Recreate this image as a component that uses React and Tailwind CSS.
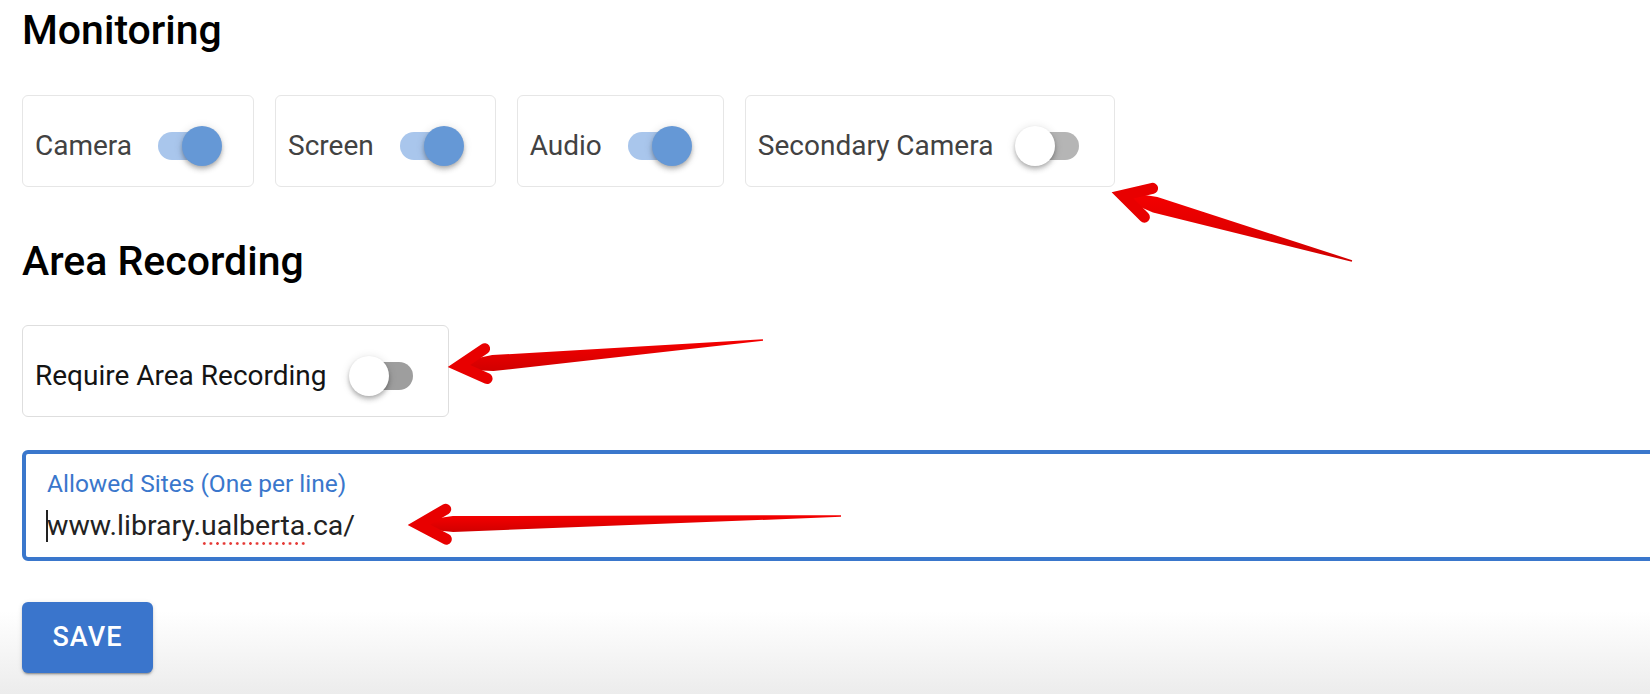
import React from 'react';

const Toggle = ({ on, dim }) => {
  const track = on ? 'bg-[#a9c6ec]' : dim ? 'bg-[#b5b5b5]' : 'bg-[#9e9e9e]';
  const thumb = on ? 'bg-[#6598d6] left-[28px]' : 'bg-white left-0';
  return (
    <div className="relative w-[68px] h-[40px] ml-[22px] shrink-0">
      <div className={`absolute left-[4px] right-[4px] top-[6px] h-[28px] rounded-full ${track}`} />
      <div
        className={`absolute top-0 w-[40px] h-[40px] rounded-full shadow-[0_2px_4px_-1px_rgba(0,0,0,0.2),0_4px_5px_0_rgba(0,0,0,0.14),0_1px_10px_0_rgba(0,0,0,0.12)] ${thumb}`}
      />
    </div>
  );
};

const SwitchCard = ({ label, on, dim }) => (
  <div
    className={`flex items-center h-[92px] pt-[10px] pl-[12px] pr-[31px] rounded-[6px] border ${
      dim ? 'border-[#e6e6e6] text-[#424242]' : 'border-[#dedede] text-[#141414]'
    }`}
  >
    <span className="text-[28px] leading-[32px] whitespace-nowrap">{label}</span>
    <Toggle on={on} dim={dim} />
  </div>
);

const arrows = [
  { tail: [1352, 261], tip: [1111, 192] },
  { tail: [763, 340], tip: [447, 367] },
  { tail: [841, 516], tip: [407, 525] },
];

const Arrow = ({ tail, tip }) => {
  const dx = tip[0] - tail[0];
  const dy = tip[1] - tail[1];
  const len = Math.hypot(dx, dy);
  const ux = dx / len;
  const uy = dy / len;
  const nx = -uy;
  const ny = ux;
  const pt = (d, w) => [tip[0] - ux * d + nx * w, tip[1] - uy * d + ny * w];
  const f = (p) => `${p[0].toFixed(1)},${p[1].toFixed(1)}`;
  const v = pt(12, 0);
  const b1 = pt(39, 15);
  const b2 = pt(39, -15);
  const shaft = [
    [tail[0] + nx * 0.8, tail[1] + ny * 0.8],
    pt(46, 8),
    pt(14, 4),
    pt(14, -4),
    pt(46, -8),
    [tail[0] - nx * 0.8, tail[1] - ny * 0.8],
  ];
  return (
    <g fill="url(#redg)" stroke="none">
      <polygon points={shaft.map(f).join(' ')} />
      <path
        d={`M${f(b1)} L${f(v)} L${f(b2)}`}
        fill="none"
        stroke="#e80000"
        strokeWidth="11"
        strokeLinecap="round"
        strokeLinejoin="miter"
        strokeMiterlimit="6"
      />
    </g>
  );
};

export default function App() {
  return (
    <div className="relative w-[1650px] h-[694px] overflow-hidden pl-[22px] font-['Roboto',sans-serif] bg-[linear-gradient(to_bottom,#ffffff_0%,#ffffff_88%,#ececec_100%)]">
      <h2 className="pt-[6px] text-[41px] leading-[48px] font-medium text-black">Monitoring</h2>

      <div className="flex gap-[21px] mt-[41px]">
        <SwitchCard label="Camera" on dim />
        <SwitchCard label="Screen" on dim />
        <SwitchCard label="Audio" on dim />
        <SwitchCard label="Secondary Camera" dim />
      </div>

      <h2 className="mt-[50px] text-[41px] leading-[48px] font-medium text-black">Area Recording</h2>

      <div className="flex mt-[40px]">
        <SwitchCard label="Require Area Recording" />
      </div>

      <div className="mt-[33px] w-[1700px] h-[111px] border-[4px] border-[#3a77cc] rounded-[6px] pl-[21px] pt-[16px]">
        <div className="text-[24.5px] leading-[28px] text-[#3a77cc]">Allowed Sites (One per line)</div>
        <div className="relative mt-[10px] text-[28.5px] leading-[36px] text-[#222222]">
          <span className="absolute left-[-1px] top-[2px] w-[2px] h-[32px] bg-[#222222]" />
          www.library.
          <span className="relative">
            ualberta
            <span className="absolute left-0 right-0 bottom-[-3px] h-[3px] bg-[radial-gradient(circle,#e53935_1.1px,transparent_1.6px)] bg-[length:6.6px_3px] bg-repeat-x" />
          </span>
          .ca/
        </div>
      </div>

      <button className="mt-[41px] w-[131px] h-[71px] rounded-[6px] bg-[#3a75cc] text-white text-[27px] font-medium tracking-[0.04em] shadow-[0_3px_1px_-2px_rgba(0,0,0,0.2),0_2px_2px_0_rgba(0,0,0,0.14),0_1px_5px_0_rgba(0,0,0,0.12)]">
        SAVE
      </button>

      <svg className="absolute inset-0 pointer-events-none" width="1650" height="694">
        <defs>
          <linearGradient id="redg" x1="0" y1="0" x2="0" y2="1">
            <stop offset="0" stopColor="#f50000" />
            <stop offset="1" stopColor="#d10000" />
          </linearGradient>
        </defs>
        {arrows.map((a, i) => (
          <Arrow key={i} tail={a.tail} tip={a.tip} />
        ))}
      </svg>
    </div>
  );
}
